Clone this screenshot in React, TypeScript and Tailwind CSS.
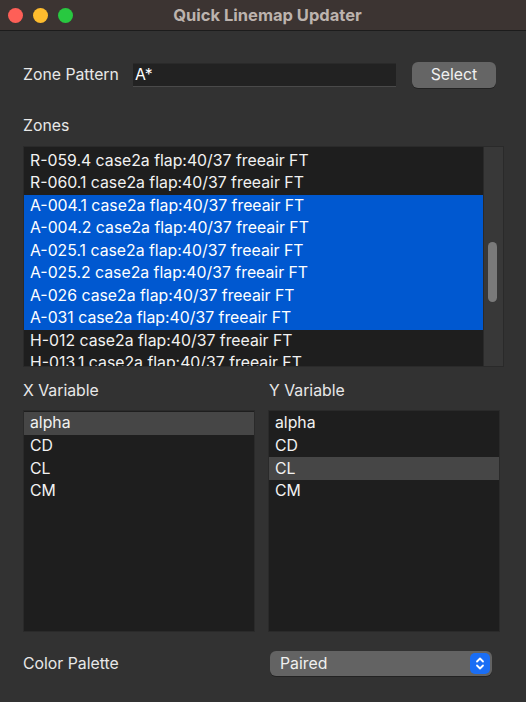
import React from "react";

const zones = [
  { t: "R-059.4 case2a flap:40/37 freeair FT", s: false },
  { t: "R-060.1 case2a flap:40/37 freeair FT", s: false },
  { t: "A-004.1 case2a flap:40/37 freeair FT", s: true },
  { t: "A-004.2 case2a flap:40/37 freeair FT", s: true },
  { t: "A-025.1 case2a flap:40/37 freeair FT", s: true },
  { t: "A-025.2 case2a flap:40/37 freeair FT", s: true },
  { t: "A-026 case2a flap:40/37 freeair FT", s: true },
  { t: "A-031 case2a flap:40/37 freeair FT", s: true },
  { t: "H-012 case2a flap:40/37 freeair FT", s: false },
  { t: "H-013.1 case2a flap:40/37 freeair FT", s: false },
];

const vars = ["alpha", "CD", "CL", "CM"];

function VarList({ selected }: { selected: string }) {
  return (
    <div className="w-[232px] h-[222px] bg-[#1e1e1e] border border-[#2a2a2a] pt-[1px] overflow-hidden">
      {vars.map((v) => (
        <div
          key={v}
          className={`h-[22.6px] flex items-center pl-[6px] text-[15.8px] text-[#f2f2f2] ${
            v === selected ? "bg-[#464646]" : ""
          }`}
        >
          {v}
        </div>
      ))}
    </div>
  );
}

export default function App() {
  return (
    <div
      className="w-[526px] h-[702px] bg-[#323232] flex flex-col overflow-hidden"
      style={{ fontFamily: "Inter, 'Liberation Sans', sans-serif" }}
    >
      {/* Title bar */}
      <div className="h-[31px] bg-[#3c3432] border-b border-[#1c1c1c] flex items-center relative shrink-0">
        <div className="flex items-center gap-[10px] pl-[8px]">
          <div className="w-[15px] h-[15px] rounded-full bg-[#fe5f57]" />
          <div className="w-[15px] h-[15px] rounded-full bg-[#febc2e]" />
          <div className="w-[15px] h-[15px] rounded-full bg-[#28c840]" />
        </div>
        <div className="absolute inset-0 flex items-center justify-center text-[16.5px] font-bold text-[#bcb3ae] pl-[9px]">
          Quick Linemap Updater
        </div>
      </div>

      <div className="flex flex-col px-[23px]">
        {/* Zone Pattern */}
        <div className="mt-[31px] h-[26px] flex items-center">
          <div className="w-[110px] text-[15.8px] text-[#e8e8e8]">Zone Pattern</div>
          <div className="w-[263px] h-[24px] bg-[#222222] border-b border-[#4a4a4a] border-t border-t-[#2a2a2a] flex items-center pl-[2px] text-[15.8px] text-white">
            A*
          </div>
          <div className="ml-[16px] w-[84px] h-[26px] rounded-[6px] bg-[#656565] flex items-center justify-center text-[15.8px] text-[#f0f0f0] shadow-[0_1px_0_rgba(0,0,0,0.3)]">
            Select
          </div>
        </div>

        {/* Zones label */}
        <div className="mt-[29px] h-[18px] flex items-center text-[15.8px] text-[#e8e8e8]">Zones</div>

        {/* Zones list */}
        <div className="mt-[11px] w-[481px] h-[221px] bg-[#1e1e1e] border border-[#2a2a2a] flex overflow-hidden">
          <div className="flex-1 pt-[2.5px] overflow-hidden">
            {zones.map((z) => (
              <div
                key={z.t}
                className={`h-[22.5px] flex items-center pl-[6px] text-[15.8px] whitespace-nowrap ${
                  z.s ? "bg-[#0058d0] text-white" : "text-[#f2f2f2]"
                }`}
              >
                {z.t}
              </div>
            ))}
          </div>
          <div className="w-[20px] bg-[#383838] border-l border-[#2a2a2a] relative">
            <div className="absolute left-[4px] top-[95px] w-[9px] h-[60px] rounded-full bg-[#7a7a7a]" />
          </div>
        </div>

        {/* Variable labels */}
        <div className="mt-[15px] h-[18px] flex items-center text-[15.8px] text-[#e8e8e8]">
          <div className="w-[246px]">X Variable</div>
          <div>Y Variable</div>
        </div>

        {/* Variable lists */}
        <div className="mt-[10px] flex gap-[13px]">
          <VarList selected="alpha" />
          <VarList selected="CL" />
        </div>

        {/* Color Palette */}
        <div className="mt-[19px] h-[25px] flex items-center">
          <div className="w-[247px] text-[15.8px] text-[#e8e8e8]">Color Palette</div>
          <div className="w-[222px] h-[25px] rounded-[6px] bg-[#636363] flex items-center justify-between pl-[10px] pr-[2px] text-[15.8px] text-[#f0f0f0] shadow-[0_1px_0_rgba(0,0,0,0.3)]">
            <span>Paired</span>
            <div className="w-[20px] h-[21px] rounded-[5px] bg-[#1a6ef5] flex items-center justify-center">
              <svg width="10" height="15" viewBox="0 0 10 15" fill="none" stroke="white" strokeWidth="1.8" strokeLinecap="round" strokeLinejoin="round">
                <path d="M2 5.5 L5 2.5 L8 5.5" />
                <path d="M2 9.5 L5 12.5 L8 9.5" />
              </svg>
            </div>
          </div>
        </div>
      </div>
    </div>
  );
}
